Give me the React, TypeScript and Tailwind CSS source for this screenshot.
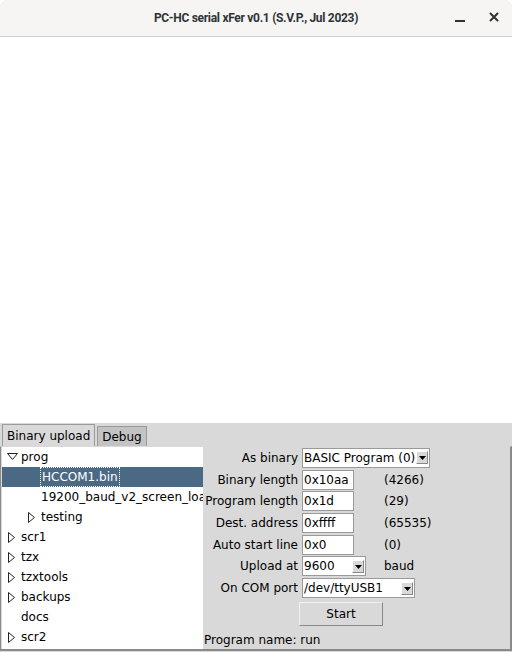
import React from "react";

const FONT = { fontFamily: '"DejaVu Sans", sans-serif' };

type Node = { label: string; depth: number; toggle?: "open" | "closed"; selected?: boolean };

const tree: Node[] = [
  { label: "prog", depth: 0, toggle: "open" },
  { label: "HCCOM1.bin", depth: 1, selected: true },
  { label: "19200_baud_v2_screen_loader.bin", depth: 1 },
  { label: "testing", depth: 1, toggle: "closed" },
  { label: "scr1", depth: 0, toggle: "closed" },
  { label: "tzx", depth: 0, toggle: "closed" },
  { label: "tzxtools", depth: 0, toggle: "closed" },
  { label: "backups", depth: 0, toggle: "closed" },
  { label: "docs", depth: 0 },
  { label: "scr2", depth: 0, toggle: "closed" },
];

function Toggle({ open }: { open: boolean }) {
  return open ? (
    <svg width="11" height="8" viewBox="0 0 11 8">
      <path d="M0.5 0.5 L10.5 0.5 L5.5 6.5 Z" fill="none" stroke="#222" strokeWidth="1" />
    </svg>
  ) : (
    <svg width="8" height="11" viewBox="0 0 8 11">
      <path d="M0.5 0.5 L6.5 5.5 L0.5 10.5 Z" fill="none" stroke="#222" strokeWidth="1" />
    </svg>
  );
}

function Arrow() {
  return (
    <div className="flex h-[13px] w-[12px] shrink-0 items-end justify-center border border-t-white border-l-white border-r-[#888] border-b-[#888] bg-[#d9d9d9] pb-[3px]">
      <svg width="7" height="4" viewBox="0 0 7 4">
        <path d="M0 0 L7 0 L3.5 4 Z" fill="#000" />
      </svg>
    </div>
  );
}

function Entry({ value, w }: { value: string; w: string }) {
  return (
    <div className={`flex h-[20px] shrink-0 items-center border border-[#9a9a9a] bg-white pl-[1px] ${w}`}>
      {value}
    </div>
  );
}

function Combo({ value, w }: { value: string; w: string }) {
  return (
    <div className={`flex h-[20px] shrink-0 items-center justify-between border border-[#9a9a9a] bg-white pl-[1px] pr-[1px] ${w}`}>
      <span className="whitespace-nowrap">{value}</span>
      <Arrow />
    </div>
  );
}

function Row({ label, children }: { label: string; children: React.ReactNode }) {
  return (
    <div className="flex h-[22px] items-center">
      <div className="w-[99px] shrink-0 pr-[4px] text-right whitespace-nowrap">{label}</div>
      {children}
    </div>
  );
}

export default function App() {
  return (
    <div className="flex h-[652px] w-[512px] flex-col overflow-hidden rounded-t-[8px] bg-[#d9d9d9] text-[12px] text-black" style={FONT}>
      <div className="relative flex h-[37px] shrink-0 items-center justify-center border-b border-[#cfcfcf] bg-[#f6f5f4]">
        <span
          className="text-[12px] tracking-[-0.3px] text-[#2e3436]"
          style={{ fontFamily: '"Roboto", sans-serif', fontWeight: 700 }}
        >
          PC-HC serial xFer v0.1 (S.V.P., Jul 2023)
        </span>
        <div className="absolute right-[13px] top-[12px] flex items-center gap-[24px]">
          <svg width="10" height="10" viewBox="0 0 10 10">
            <rect x="0" y="8" width="10" height="2" fill="#2e3436" />
          </svg>
          <svg width="10" height="10" viewBox="0 0 10 10">
            <path d="M1 1 L9 9 M9 1 L1 9" stroke="#2e3436" strokeWidth="2" />
          </svg>
        </div>
      </div>

      <div className="h-[386px] shrink-0 bg-white" />

      <div className="flex h-[23px] shrink-0 items-end pl-[2px]">
        <div className="flex h-[22px] items-center border border-b-0 border-[#9a9a9a] bg-[#d9d9d9] px-[4px]">Binary upload</div>
        <div className="ml-[2px] flex h-[20px] items-center border border-b-0 border-[#9a9a9a] bg-[#c3c3c3] px-[4px]">Debug</div>
      </div>

      <div className="flex h-[205px] shrink-0 border-b-[2px] border-l border-r-[2px] border-[#8a8a8a] border-t border-t-[#d9d9d9]">
        <div className="ml-[1px] h-[202px] w-[201px] shrink-0 overflow-hidden bg-white">
          {tree.map((n) => (
            <div
              key={n.label}
              className={`flex h-[20px] items-center whitespace-nowrap ${n.selected ? "bg-[#4a6984] text-white" : ""}`}
              style={{ paddingLeft: n.depth * 20 }}
            >
              <div className="flex w-[19px] shrink-0 items-center justify-center pl-[1px]">
                {n.toggle ? <Toggle open={n.toggle === "open"} /> : null}
              </div>
              <span className={`shrink-0 ${n.selected ? "mx-[-1px] border border-dotted border-white px-[1px]" : ""}`}>
                {n.label}
              </span>
            </div>
          ))}
        </div>

        <div className="flex min-w-0 flex-1 flex-col">
          <Row label="As binary">
            <Combo value="BASIC Program (0)" w="w-[128px]" />
          </Row>
          <Row label="Binary length">
            <Entry value="0x10aa" w="w-[52px]" />
            <span className="ml-[30px]">(4266)</span>
          </Row>
          <Row label="Program length">
            <Entry value="0x1d" w="w-[52px]" />
            <span className="ml-[30px]">(29)</span>
          </Row>
          <Row label="Dest. address">
            <Entry value="0xffff" w="w-[52px]" />
            <span className="ml-[30px]">(65535)</span>
          </Row>
          <Row label="Auto start line">
            <Entry value="0x0" w="w-[52px]" />
            <span className="ml-[30px]">(0)</span>
          </Row>
          <Row label="Upload at">
            <Combo value="9600" w="w-[64px]" />
            <span className="ml-[18px]">baud</span>
          </Row>
          <Row label="On COM port">
            <Combo value="/dev/ttyUSB1" w="w-[113px]" />
          </Row>
          <div className="mt-[3px] flex pl-[96px]">
            <div className="flex h-[24px] w-[84px] items-center justify-center border border-t-[#f0f0f0] border-l-[#f0f0f0] border-r-[#888] border-b-[#888] bg-[#d9d9d9]">
              Start
            </div>
          </div>
          <div className="mt-[5px] pl-[1px] whitespace-nowrap">Program name: run</div>
        </div>
      </div>
    </div>
  );
}
